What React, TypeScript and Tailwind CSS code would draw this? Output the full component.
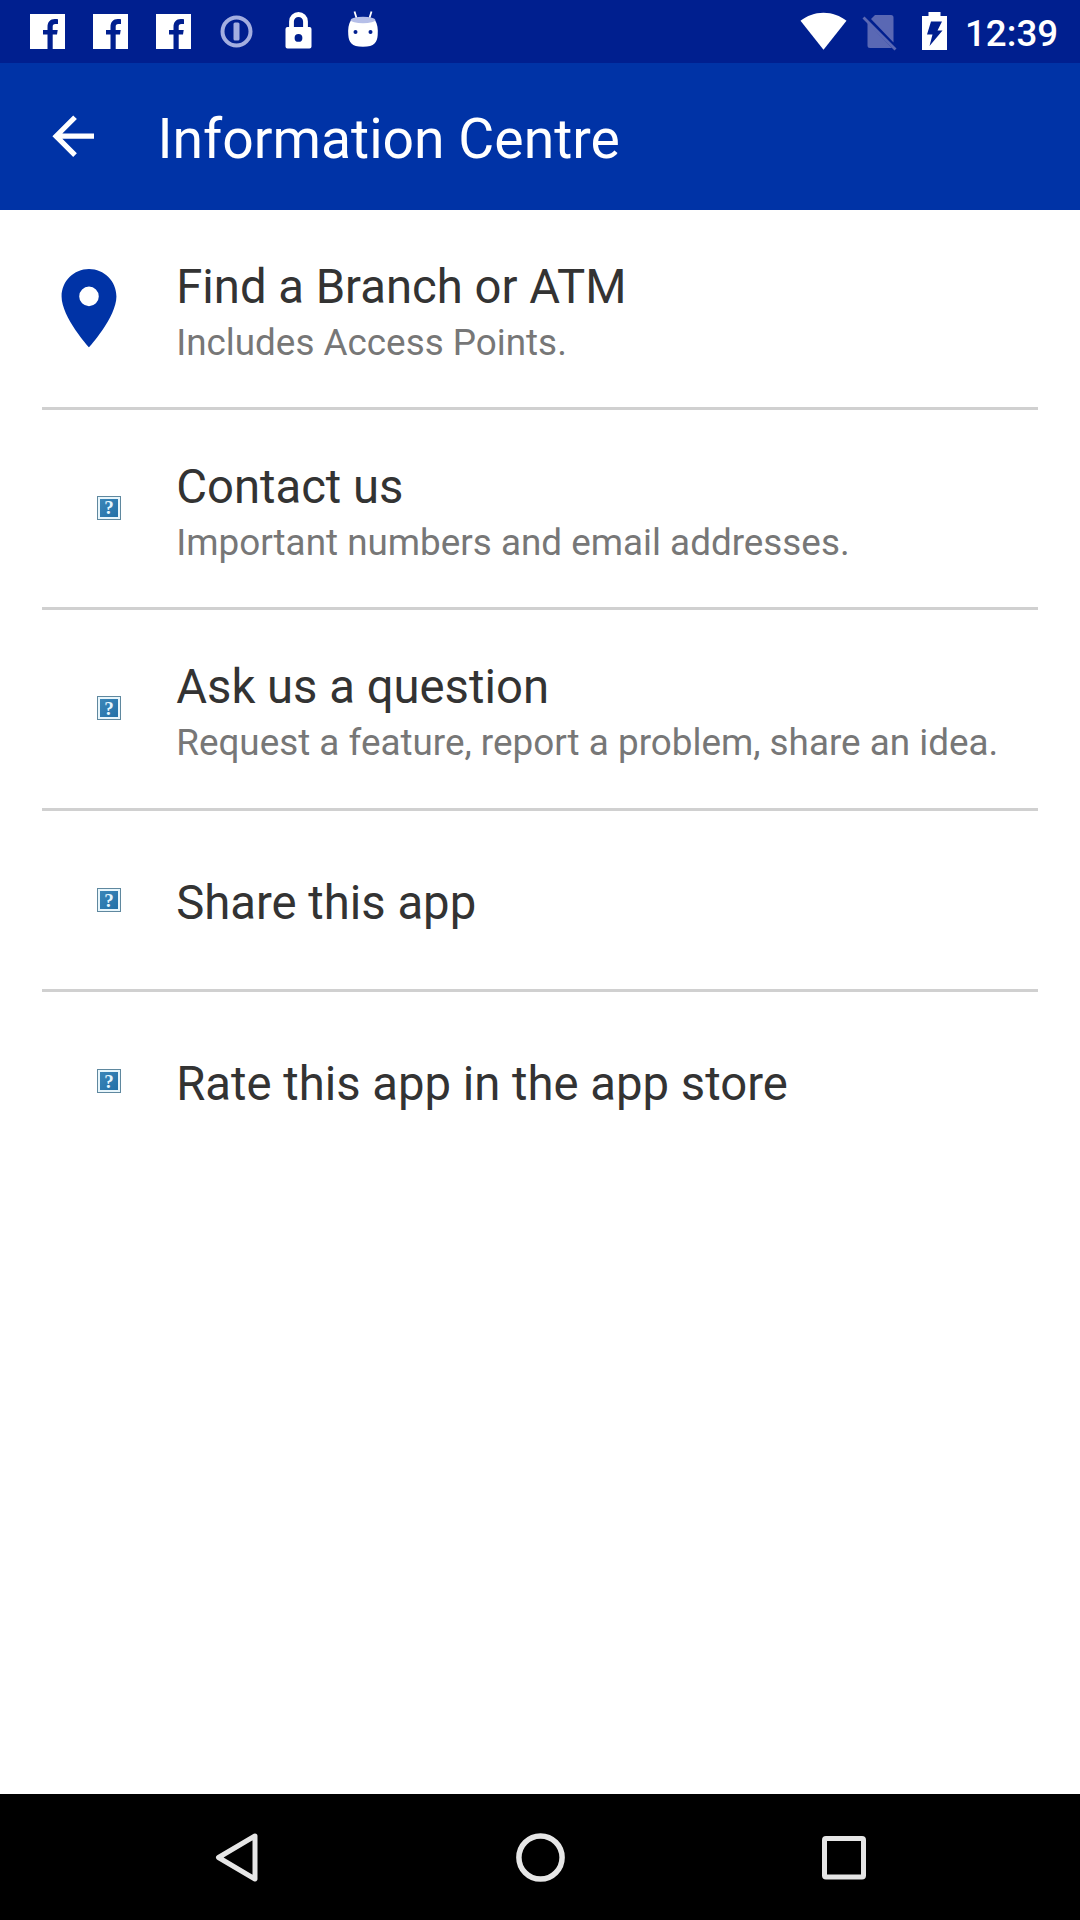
type Item = { title: string; subtitle?: string; pin?: boolean; height: string };

const items: Item[] = [
  { title: "Find a Branch or ATM", subtitle: "Includes Access Points.", pin: true, height: "h-[200px]" },
  { title: "Contact us", subtitle: "Important numbers and email addresses.", height: "h-[200px]" },
  { title: "Ask us a question", subtitle: "Request a feature, report a problem, share an idea.", height: "h-[201px]" },
  { title: "Share this app", height: "h-[181px]" },
  { title: "Rate this app in the app store", height: "h-[181px]" },
];

function FacebookIcon() {
  return (
    <svg className="h-[35px] w-[35px] shrink-0" viewBox="0 0 35 35">
      <rect width="35" height="35" fill="#fff" />
      <path d="M17.5 35V20.500h-4.500v-4.500h4.500v-2.800c0-5.200 2.600-8.200 7.300-8.200 1.200 0 2.200.1 3.200.3v4.700h-2.600c-2.100 0-2.700 1-2.700 2.700v3.300h5l-.7 4.500h-4.300V35z" fill="#001f8f" />
    </svg>
  );
}

function StatusBar() {
  return (
    <div className="flex h-[63px] items-start bg-[#001f8f] pl-[30px]">
      <div className="flex gap-[28px] pt-[14px]">
        <FacebookIcon />
        <FacebookIcon />
        <FacebookIcon />
      </div>
      <svg className="ml-[29px] mt-[15px] h-[33px] w-[33px]" viewBox="0 0 33 33">
        <circle cx="16.500" cy="16.500" r="14" fill="none" stroke="#a3aee0" strokeWidth="4" />
        <rect x="13.500" y="7.500" width="6" height="18" rx="1.500" fill="#a3aee0" />
      </svg>
      <svg className="ml-[32px] mt-[12px] h-[37px] w-[27px]" viewBox="0 0 26 37">
        <path d="M6 16V9.500a7 7 0 0 1 14 0V16" fill="none" stroke="#fff" strokeWidth="4.800" />
        <path fillRule="evenodd" d="M2 15h22a2 2 0 0 1 2 2v17.500a2 2 0 0 1-2 2H2a2 2 0 0 1-2-2V17a2 2 0 0 1 2-2zm11 7a3.900 3.900 0 1 0 0 7.800 3.900 3.900 0 0 0 0-7.800z" fill="#fff" />
      </svg>
      <svg className="ml-[35px] mt-[10px] h-[38px] w-[32px]" viewBox="0 0 32 38">
        <path d="M7.500 1.500l2 6.500M24.500 1.500l-2 6.500" stroke="#fff" strokeWidth="1.800" fill="none" />
        <path d="M4 10C1.500 14 .8 19 1.300 25c.5 7 3 11.800 14.700 11.800S30.200 32 30.700 25c.5-6-.2-11-2.700-15z" fill="#fff" />
        <ellipse cx="16" cy="10" rx="12.300" ry="3.300" fill="#b6bfe8" />
        <circle cx="8.500" cy="22" r="2" fill="#001f8f" />
        <circle cx="23.500" cy="22" r="2" fill="#001f8f" />
      </svg>
      <svg className="ml-[421px] mt-[12px] h-[38px] w-[47px]" viewBox="0 0 47 38">
        <path d="M23.500 37.800L.5 8.800C7 3.800 14.500.8 23.500.8s16.500 3 23 8z" fill="#fff" />
      </svg>
      <svg className="ml-[15px] mt-[14px] h-[37px] w-[36px]" viewBox="0 0 36 37">
        <path d="M13 1h16a2.500 2.500 0 0 1 2.500 2.500V28.500L9 5zM5.500 8.500L30 34H8A2.500 2.500 0 0 1 5.500 31.500z" fill="#5a68b4" />
        <path d="M1.500 3.500l32 32" stroke="#5a68b4" strokeWidth="2.800" />
      </svg>
      <svg className="ml-[24px] mt-[12px] h-[38px] w-[25px]" viewBox="0 0 25 38">
        <path d="M6.500 0h12v4H25v34H0V4h6.500z" fill="#fff" />
        <path d="M9 9.500h11l-4.500 9h5L7.500 34l3-11.500H5z" fill="#001f8f" />
      </svg>
      <span className="ml-[18px] mt-[9px] whitespace-nowrap text-[36.700px] font-medium leading-[49px] text-white">12:39</span>
    </div>
  );
}

function PinIcon() {
  return (
    <svg className="h-[94.300px] w-[94.300px]" viewBox="0 0 24 24" fill="#0033a6">
      <path d="M12 2C8.130 2 5 5.130 5 9c0 5.250 7 13 7 13s7-7.750 7-13c0-3.870-3.130-7-7-7zm0 9.500a2.500 2.500 0 0 1 0-5 2.500 2.500 0 0 1 0 5z" />
    </svg>
  );
}

function MissingImage() {
  return (
    <span className="ml-[55px] flex h-6 w-6 border border-[#5f889f] bg-[#e8f6fc] p-[2px]">
      <span className="flex flex-1 items-center justify-center bg-linear-to-br from-[#3b86b8] to-[#2270a8] font-['Liberation_Serif'] text-[19px] font-bold leading-none text-[#e4f6ff]">
        ?
      </span>
    </span>
  );
}

function Row({ item, last }: { item: Item; last: boolean }) {
  return (
    <li className={`flex items-center ${item.height} ${last ? "border-b-[3px] border-transparent" : "border-b-[3px] border-[#d0d0d0]"}`}>
      <div className={`flex w-[94px] shrink-0 ${item.subtitle && !item.pin ? "pb-[2px]" : ""}`}>
        {item.pin ? <PinIcon /> : <MissingImage />}
      </div>
      <div className={`ml-[40.200px] flex flex-col gap-[2px] whitespace-nowrap ${item.subtitle ? "pt-[6px]" : "pt-[5px]"}`}>
        <span className="text-[47.250px] leading-[60px] text-[#333333]">{item.title}</span>
        {item.subtitle && <span className="text-[36.850px] leading-[48px] text-[#777777]">{item.subtitle}</span>}
      </div>
    </li>
  );
}

export default function App() {
  return (
    <div className="flex h-[1920px] w-[1080px] flex-col overflow-hidden bg-white font-['Roboto',sans-serif]">
      <StatusBar />
      <header className="flex h-[147px] items-center bg-[#0033a6] pl-[42px]">
        <svg className="h-[62.400px] w-[62.400px]" viewBox="0 0 24 24" fill="#fff">
          <path d="M20 11H7.830l5.590-5.590L12 4l-8 8 8 8 1.410-1.410L7.830 13H20v-2z" />
        </svg>
        <h1 className="ml-[53px] whitespace-nowrap pt-[6px] text-[55.300px] leading-[66px] text-white">Information Centre</h1>
      </header>
      <ul className="flex-1 px-[42px]">
        {items.map((item, i) => (
          <Row key={item.title} item={item} last={i === items.length - 1} />
        ))}
      </ul>
      <nav className="flex h-[126px] bg-black pl-[215px] pt-[38px]">
        <svg className="h-[51px] w-[44px]" viewBox="0 0 44 51" fill="none" stroke="#e6e6e6" strokeWidth="5" strokeLinejoin="round">
          <path d="M40 4L3.500 25.500 40 47z" />
        </svg>
        <svg className="ml-[256px] h-[51px] w-[51px]" viewBox="0 0 51 51" fill="none" stroke="#e6e6e6" strokeWidth="5.500">
          <circle cx="25.500" cy="25.500" r="21.600" />
        </svg>
        <svg className="ml-[256px] mt-[4px] h-[44px] w-[44px]" viewBox="0 0 44 44" fill="none" stroke="#e6e6e6" strokeWidth="5">
          <rect x="2.500" y="2.500" width="39" height="38.500" rx="1.500" />
        </svg>
      </nav>
    </div>
  );
}
